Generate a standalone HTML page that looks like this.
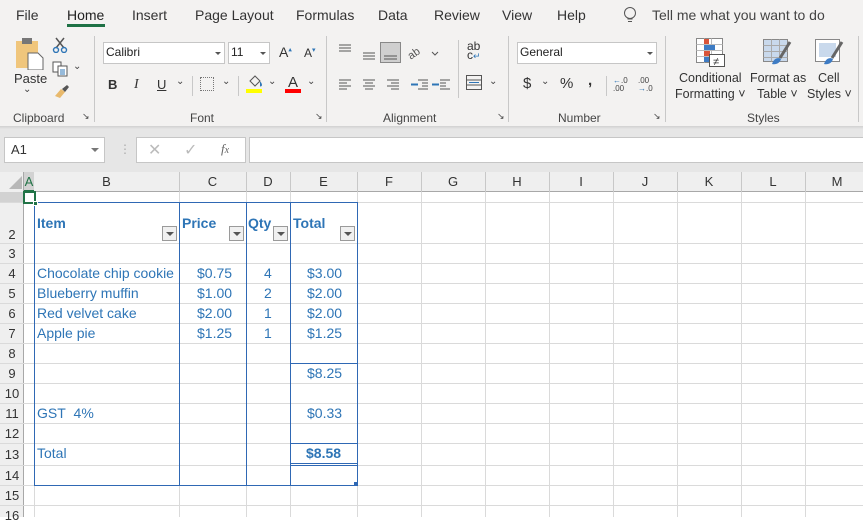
<!DOCTYPE html>
<html><head><meta charset="utf-8"><style>
*{margin:0;padding:0;box-sizing:border-box}
body{width:863px;height:517px;overflow:hidden;background:#fff;font-family:"Segoe UI","Liberation Sans",sans-serif;color:#333;position:relative}
.a{position:absolute}
.t{font-size:13px;color:#333;white-space:nowrap}
.sm{font-size:12px;color:#444;white-space:nowrap}
.vl{position:absolute;width:1px;background:#dadada}
.hl{position:absolute;height:1px;background:#dadada}
.bl{position:absolute;background:#2f68b4}
.c{position:absolute;font-family:"Liberation Sans",sans-serif;font-size:14px;color:#2e75b6;white-space:nowrap;margin-top:-1px}
.rh{position:absolute;left:0;width:24px;text-align:center;font-family:"Liberation Sans",sans-serif;font-size:13px;color:#333}
.ch{position:absolute;top:172px;height:20px;line-height:20px;text-align:center;font-family:"Liberation Sans",sans-serif;font-size:13px;color:#333}
.dd{position:absolute;width:15px;height:15px;border:1px solid #9a9a9a;background:#f0f0f0}
.dd:after{content:"";position:absolute;left:3px;top:5px;border-left:4px solid transparent;border-right:4px solid transparent;border-top:4px solid #555}
.sep{position:absolute;width:1px;background:#c8c8c8}
</style></head><body>
<div class="a" style="left:0;top:0;width:863px;height:126px;background:#f3f2f1"></div>
<div class="a" style="left:0;top:126px;width:863px;height:46px;background:#e6e6e6"></div>
<div class="a" style="left:0;top:126px;width:863px;height:3px;background:linear-gradient(#d0d0d0,#e6e6e6)"></div>
<div class="a t" style="left:16px;top:7px;font-size:14px">File</div>
<div class="a t" style="left:67px;top:7px;font-size:14px;color:#222">Home</div>
<div class="a" style="left:67px;top:24px;width:38px;height:3px;background:#1e7145"></div>
<div class="a t" style="left:132px;top:7px;font-size:14px">Insert</div>
<div class="a t" style="left:195px;top:7px;font-size:14px">Page Layout</div>
<div class="a t" style="left:296px;top:7px;font-size:14px">Formulas</div>
<div class="a t" style="left:378px;top:7px;font-size:14px">Data</div>
<div class="a t" style="left:434px;top:7px;font-size:14px">Review</div>
<div class="a t" style="left:502px;top:7px;font-size:14px">View</div>
<div class="a t" style="left:557px;top:7px;font-size:14px">Help</div>
<svg class="a" style="left:622px;top:6px" width="16" height="20"><circle cx="8" cy="7" r="5.5" fill="none" stroke="#555"/><path d="M5.5 13h5M6 15.5h4" stroke="#555"/></svg>
<div class="a t" style="left:652px;top:7px;font-size:14px;color:#444">Tell me what you want to do</div>
<svg class="a" style="left:14px;top:36px" width="32" height="34"><rect x="2" y="5" width="22" height="27" fill="#f0c67c"/><rect x="8" y="2" width="10" height="6" fill="#777"/><path d="M14 17h10l5 5v12H14z" fill="#fff" stroke="#666"/></svg>
<div class="a t" style="left:14px;top:71px">Paste</div>
<div class="a sm" style="left:23px;top:84px;font-size:10px">⌄</div>
<svg class="a" style="left:52px;top:37px" width="16" height="16"><path d="M4 1l8 10M12 1L4 11" stroke="#555" stroke-width="1.5"/><circle cx="4" cy="13" r="2.5" fill="none" stroke="#2e75b6" stroke-width="1.4"/><circle cx="12" cy="13" r="2.5" fill="none" stroke="#2e75b6" stroke-width="1.4"/></svg>
<svg class="a" style="left:52px;top:61px" width="16" height="16"><rect x="1" y="1" width="8" height="10" fill="#fff" stroke="#555"/><rect x="6" y="5" width="9" height="10" fill="#fff" stroke="#555"/><path d="M8 9h5M8 11h5M8 13h5" stroke="#2e75b6"/></svg>
<div class="a sm" style="left:73px;top:61px;font-size:10px">⌄</div>
<svg class="a" style="left:52px;top:83px" width="18" height="16"><path d="M3 13l6-7 4 3-5 6z" fill="#e8b96c"/><path d="M10 6l5-4 2 2-4 5z" fill="#555"/></svg>
<div class="a sm" style="left:13px;top:111px">Clipboard</div>
<div class="a sm" style="left:82px;top:111px;font-size:9px">↘</div>
<div class="sep" style="left:94px;top:36px;height:86px"></div>
<div class="a" style="left:103px;top:42px;width:122px;height:22px;background:#fff;border:1px solid #c6c6c6"></div>
<div class="a t" style="left:106px;top:45px;font-size:12px;color:#222">Calibri</div>
<div class="a" style="left:215px;top:52px;border-left:3px solid transparent;border-right:3px solid transparent;border-top:3px solid #555"></div>
<div class="a" style="left:228px;top:42px;width:42px;height:22px;background:#fff;border:1px solid #c6c6c6"></div>
<div class="a t" style="left:231px;top:45px;font-size:12px;color:#222">11</div>
<div class="a" style="left:260px;top:52px;border-left:3px solid transparent;border-right:3px solid transparent;border-top:3px solid #555"></div>
<div class="a t" style="left:279px;top:44px;font-size:14px">A<sup style="font-size:7px;color:#2e75b6">▴</sup></div>
<div class="a t" style="left:304px;top:46px;font-size:12px">A<sup style="font-size:7px;color:#2e75b6">▾</sup></div>
<div class="a t" style="left:108px;top:77px;font-weight:bold;font-family:'Liberation Sans'">B</div>
<div class="a t" style="left:134px;top:77px;font-style:italic;font-family:'Liberation Serif';font-size:14px">I</div>
<div class="a t" style="left:157px;top:77px;text-decoration:underline;font-family:'Liberation Sans'">U</div>
<div class="a sm" style="left:176px;top:76px;font-size:10px">⌄</div>
<div class="sep" style="left:192px;top:76px;height:20px"></div>
<div class="a" style="left:200px;top:77px;width:14px;height:14px;border:1px dotted #777"></div>
<div class="a sm" style="left:222px;top:76px;font-size:10px">⌄</div>
<div class="sep" style="left:238px;top:76px;height:20px"></div>
<svg class="a" style="left:246px;top:75px" width="18" height="14"><path d="M4 6l5-5 5 5-5 5z" fill="none" stroke="#555"/><path d="M14 7c2 2 2 4 0 4" stroke="#2e75b6" fill="#2e75b6"/></svg>
<div class="a" style="left:246px;top:89px;width:16px;height:4px;background:#ffff00"></div>
<div class="a sm" style="left:268px;top:76px;font-size:10px">⌄</div>
<div class="a t" style="left:288px;top:74px;font-size:15px">A</div>
<div class="a" style="left:285px;top:89px;width:16px;height:4px;background:#ff0000"></div>
<div class="a sm" style="left:307px;top:76px;font-size:10px">⌄</div>
<div class="a sm" style="left:190px;top:111px">Font</div>
<div class="a sm" style="left:315px;top:111px;font-size:9px">↘</div>
<div class="sep" style="left:326px;top:36px;height:86px"></div>
<svg class="a" style="left:336px;top:40px" width="170" height="60" stroke="#555" fill="none">
<path d="M3 5h12M3 8h12M3 11h12M27 13h12M27 16h12M27 19h12"/>
<rect x="44.5" y="2.5" width="20" height="20" fill="#cfcfcf" stroke="#888"/><path d="M48 16h13M48 19h13"/>
<text x="72" y="17" font-size="11" fill="#555" stroke="none" transform="rotate(-35 78 14)">ab</text><path d="M96 12l3 3 3-3"/>
<path d="M3 40h12M3 43h8M3 46h12M3 49h8M27 40h12M29 43h8M27 46h12M29 49h8M51 40h12M55 43h8M51 46h12M55 49h8"/>
<path d="M82 40h10M86 43h6M86 46h6M82 49h10" /><path d="M75 44.5h7" stroke="#2e75b6" stroke-width="2"/>
<path d="M104 40h10M104 43h6M104 46h6M104 49h10"/><path d="M96 44.5h7" stroke="#2e75b6" stroke-width="2"/>
</svg>
<div class="sep" style="left:458px;top:40px;height:58px"></div>
<div class="a t" style="left:467px;top:42px;font-size:12px;line-height:9px">ab<br>c<span style="color:#2e75b6;font-size:9px">↵</span></div>
<svg class="a" style="left:465px;top:74px" width="20" height="18"><rect x="1.5" y="1.5" width="15" height="14" fill="none" stroke="#555"/><path d="M1.5 6h15M1.5 11h15" stroke="#555"/><path d="M4 8.5h10" stroke="#2e75b6"/></svg>
<div class="a sm" style="left:489px;top:76px;font-size:10px">⌄</div>
<div class="a sm" style="left:383px;top:111px">Alignment</div>
<div class="a sm" style="left:497px;top:111px;font-size:9px">↘</div>
<div class="sep" style="left:508px;top:36px;height:86px"></div>
<div class="a" style="left:517px;top:42px;width:140px;height:22px;background:#fff;border:1px solid #c6c6c6"></div>
<div class="a t" style="left:520px;top:45px;font-size:12px;color:#222">General</div>
<div class="a" style="left:647px;top:52px;border-left:3px solid transparent;border-right:3px solid transparent;border-top:3px solid #555"></div>
<div class="a t" style="left:523px;top:75px;font-size:15px">$</div>
<div class="a sm" style="left:541px;top:76px;font-size:10px">⌄</div>
<div class="a t" style="left:560px;top:75px;font-size:15px">%</div>
<div class="a t" style="left:588px;top:72px;font-size:15px;font-weight:bold">,</div>
<div class="sep" style="left:606px;top:76px;height:20px"></div>
<div class="a" style="left:613px;top:77px;font-size:8px;line-height:8px;color:#444;font-family:'Liberation Sans'"><span style="color:#2e75b6">←</span>.0<br>.00</div>
<div class="a" style="left:638px;top:77px;font-size:8px;line-height:8px;color:#444;font-family:'Liberation Sans'">.00<br><span style="color:#2e75b6">→</span>.0</div>
<div class="a sm" style="left:558px;top:111px">Number</div>
<div class="a sm" style="left:653px;top:111px;font-size:9px">↘</div>
<div class="sep" style="left:665px;top:36px;height:86px"></div>
<svg class="a" style="left:695px;top:37px" width="32" height="32"><rect x="1.5" y="1.5" width="26" height="24" fill="#fff" stroke="#888"/><path d="M1.5 7.5h26M1.5 13.5h26M1.5 19.5h26M9.5 1.5v24M16.5 1.5v24" stroke="#bbb"/><rect x="9" y="2" width="5" height="5" fill="#d9553a"/><rect x="9" y="8" width="11" height="5" fill="#3e7cc4"/><rect x="9" y="14" width="6" height="5" fill="#d9553a"/><rect x="9" y="20" width="5" height="5" fill="#3e7cc4"/><rect x="14.5" y="17.5" width="15" height="12" fill="#fff" stroke="#555"/><text x="18" y="28" font-size="11" fill="#333">≠</text></svg>
<svg class="a" style="left:762px;top:38px" width="32" height="30"><rect x="1.5" y="1.5" width="24" height="22" fill="#c9d9ec" stroke="#888"/><path d="M1.5 7.5h24M1.5 13.5h24M1.5 19.5h24M9.5 1.5v22M17.5 1.5v22" stroke="#aaa"/><path d="M28 4l-10 16" stroke="#666" stroke-width="3"/><path d="M10 26c2-6 6-7 9-5-1 4-5 6-9 5z" fill="#3e7cc4"/></svg>
<svg class="a" style="left:814px;top:38px" width="32" height="30"><rect x="1.5" y="1.5" width="24" height="22" fill="#fff" stroke="#888"/><rect x="5" y="5" width="17" height="14" fill="#c9d9ec"/><path d="M28 4l-10 16" stroke="#666" stroke-width="3"/><path d="M10 26c2-6 6-7 9-5-1 4-5 6-9 5z" fill="#3e7cc4"/></svg>
<div class="a t" style="left:679px;top:71px;font-size:12.5px">Conditional</div>
<div class="a t" style="left:675px;top:87px;font-size:12.5px">Formatting ˅</div>
<div class="a t" style="left:750px;top:71px;font-size:12.5px">Format as</div>
<div class="a t" style="left:757px;top:87px;font-size:12.5px">Table ˅</div>
<div class="a t" style="left:818px;top:71px;font-size:12.5px">Cell</div>
<div class="a t" style="left:807px;top:87px;font-size:12.5px">Styles ˅</div>
<div class="a sm" style="left:747px;top:111px">Styles</div>
<div class="sep" style="left:858px;top:36px;height:86px"></div>
<div class="a" style="left:4px;top:137px;width:101px;height:26px;background:#fff;border:1px solid #c6c6c6"></div>
<div class="a t" style="left:11px;top:142px;font-family:'Liberation Sans'">A1</div>
<div class="a" style="left:91px;top:148px;border-left:4px solid transparent;border-right:4px solid transparent;border-top:4px solid #777"></div>
<div class="a sm" style="left:119px;top:142px;color:#aaa">⋮</div>
<div class="a" style="left:136px;top:137px;width:110px;height:26px;background:#fff;border:1px solid #c6c6c6"></div>
<div class="a" style="left:148px;top:140px;font-size:16px;color:#bbb">✕</div>
<div class="a" style="left:184px;top:140px;font-size:16px;color:#bbb">✓</div>
<div class="a" style="left:221px;top:141px;font-size:13px;color:#666;font-style:italic;font-family:'Liberation Serif'">f<span style="font-size:10px">x</span></div>
<div class="a" style="left:249px;top:137px;width:620px;height:26px;background:#fff;border:1px solid #c6c6c6"></div>
<div class="a" style="left:0;top:172px;width:863px;height:20px;background:#efefef;border-bottom:1px solid #a8a8a8"></div>
<div class="a" style="left:0;top:172px;width:24px;height:345px;background:#efefef;border-right:1px solid #a8a8a8"></div>
<div class="a" style="left:9px;top:176px;border-left:13px solid transparent;border-bottom:13px solid #b8b8b8"></div>
<div class="a" style="left:24px;top:172px;width:10px;height:20px;background:#d2d2d2;border-bottom:2px solid #217346"></div>
<div class="a" style="left:0;top:192px;width:24px;height:10px;background:#d2d2d2"></div>
<div class="ch" style="left:24px;width:10px;color:#217346">A</div>
<div class="ch" style="left:34px;width:145px">B</div>
<div class="ch" style="left:179px;width:67px">C</div>
<div class="ch" style="left:246px;width:44px">D</div>
<div class="ch" style="left:290px;width:67px">E</div>
<div class="ch" style="left:357px;width:64px">F</div>
<div class="ch" style="left:421px;width:64px">G</div>
<div class="ch" style="left:485px;width:64px">H</div>
<div class="ch" style="left:549px;width:64px">I</div>
<div class="ch" style="left:613px;width:64px">J</div>
<div class="ch" style="left:677px;width:64px">K</div>
<div class="ch" style="left:741px;width:64px">L</div>
<div class="ch" style="left:805px;width:64px">M</div>
<div class="vl" style="left:179px;top:172px;height:20px;background:#c8c8c8"></div>
<div class="vl" style="left:246px;top:172px;height:20px;background:#c8c8c8"></div>
<div class="vl" style="left:290px;top:172px;height:20px;background:#c8c8c8"></div>
<div class="vl" style="left:357px;top:172px;height:20px;background:#c8c8c8"></div>
<div class="vl" style="left:421px;top:172px;height:20px;background:#c8c8c8"></div>
<div class="vl" style="left:485px;top:172px;height:20px;background:#c8c8c8"></div>
<div class="vl" style="left:549px;top:172px;height:20px;background:#c8c8c8"></div>
<div class="vl" style="left:613px;top:172px;height:20px;background:#c8c8c8"></div>
<div class="vl" style="left:677px;top:172px;height:20px;background:#c8c8c8"></div>
<div class="vl" style="left:741px;top:172px;height:20px;background:#c8c8c8"></div>
<div class="vl" style="left:805px;top:172px;height:20px;background:#c8c8c8"></div>
<div class="vl" style="left:34px;top:192px;height:325px"></div>
<div class="vl" style="left:179px;top:192px;height:325px"></div>
<div class="vl" style="left:246px;top:192px;height:325px"></div>
<div class="vl" style="left:290px;top:192px;height:325px"></div>
<div class="vl" style="left:357px;top:192px;height:325px"></div>
<div class="vl" style="left:421px;top:192px;height:325px"></div>
<div class="vl" style="left:485px;top:192px;height:325px"></div>
<div class="vl" style="left:549px;top:192px;height:325px"></div>
<div class="vl" style="left:613px;top:192px;height:325px"></div>
<div class="vl" style="left:677px;top:192px;height:325px"></div>
<div class="vl" style="left:741px;top:192px;height:325px"></div>
<div class="vl" style="left:805px;top:192px;height:325px"></div>
<div class="hl" style="left:0;top:202px;width:863px"></div>
<div class="hl" style="left:0;top:243px;width:863px"></div>
<div class="hl" style="left:0;top:263px;width:863px"></div>
<div class="hl" style="left:0;top:283px;width:863px"></div>
<div class="hl" style="left:0;top:303px;width:863px"></div>
<div class="hl" style="left:0;top:323px;width:863px"></div>
<div class="hl" style="left:0;top:343px;width:863px"></div>
<div class="hl" style="left:0;top:363px;width:863px"></div>
<div class="hl" style="left:0;top:383px;width:863px"></div>
<div class="hl" style="left:0;top:403px;width:863px"></div>
<div class="hl" style="left:0;top:423px;width:863px"></div>
<div class="hl" style="left:0;top:443px;width:863px"></div>
<div class="hl" style="left:0;top:465px;width:863px"></div>
<div class="hl" style="left:0;top:485px;width:863px"></div>
<div class="hl" style="left:0;top:505px;width:863px"></div>
<div class="rh" style="top:227px">2</div>
<div class="rh" style="top:246px">3</div>
<div class="rh" style="top:266px">4</div>
<div class="rh" style="top:286px">5</div>
<div class="rh" style="top:306px">6</div>
<div class="rh" style="top:326px">7</div>
<div class="rh" style="top:346px">8</div>
<div class="rh" style="top:366px">9</div>
<div class="rh" style="top:386px">10</div>
<div class="rh" style="top:406px">11</div>
<div class="rh" style="top:426px">12</div>
<div class="rh" style="top:447px">13</div>
<div class="rh" style="top:468px">14</div>
<div class="rh" style="top:488px">15</div>
<div class="rh" style="top:508px">16</div>
<div class="bl" style="left:34px;top:202px;width:324px;height:1px"></div>
<div class="bl" style="left:34px;top:485px;width:324px;height:1px"></div>
<div class="bl" style="left:34px;top:202px;width:1px;height:284px"></div>
<div class="bl" style="left:179px;top:202px;width:1px;height:284px"></div>
<div class="bl" style="left:246px;top:202px;width:1px;height:284px"></div>
<div class="bl" style="left:290px;top:202px;width:1px;height:284px"></div>
<div class="bl" style="left:357px;top:202px;width:1px;height:284px"></div>
<div class="bl" style="left:290px;top:363px;width:68px;height:1px"></div>
<div class="bl" style="left:290px;top:443px;width:68px;height:1px"></div>
<div class="bl" style="left:290px;top:463px;width:68px;height:1px"></div>
<div class="bl" style="left:290px;top:465px;width:68px;height:1px"></div>
<div class="a" style="left:354px;top:482px;width:4px;height:4px;background:#2f68b4"></div>
<div class="a" style="left:23px;top:191px;width:13px;height:13px;border:2px solid #217346"></div>
<div class="a" style="left:33px;top:201px;width:5px;height:5px;background:#217346;border:1px solid #fff"></div>
<div class="c" style="left:37px;top:216px;font-weight:bold">Item</div>
<div class="c" style="left:182px;top:216px;font-weight:bold">Price</div>
<div class="c" style="left:248px;top:216px;font-weight:bold">Qty</div>
<div class="c" style="left:293px;top:216px;font-weight:bold">Total</div>
<div class="dd" style="left:162px;top:226px"></div>
<div class="dd" style="left:229px;top:226px"></div>
<div class="dd" style="left:273px;top:226px"></div>
<div class="dd" style="left:340px;top:226px"></div>
<div class="c" style="left:37px;top:266px">Chocolate chip cookie</div>
<div class="c" style="left:37px;top:286px">Blueberry muffin</div>
<div class="c" style="left:37px;top:306px">Red velvet cake</div>
<div class="c" style="left:37px;top:326px">Apple pie</div>
<div class="c" style="left:197px;top:266px">$0.75</div>
<div class="c" style="left:197px;top:286px">$1.00</div>
<div class="c" style="left:197px;top:306px">$2.00</div>
<div class="c" style="left:197px;top:326px">$1.25</div>
<div class="c" style="left:264px;top:266px">4</div>
<div class="c" style="left:264px;top:286px">2</div>
<div class="c" style="left:264px;top:306px">1</div>
<div class="c" style="left:264px;top:326px">1</div>
<div class="c" style="left:307px;top:266px">$3.00</div>
<div class="c" style="left:307px;top:286px">$2.00</div>
<div class="c" style="left:307px;top:306px">$2.00</div>
<div class="c" style="left:307px;top:326px">$1.25</div>
<div class="c" style="left:307px;top:366px">$8.25</div>
<div class="c" style="left:37px;top:406px">GST&nbsp; 4%</div>
<div class="c" style="left:307px;top:406px">$0.33</div>
<div class="c" style="left:37px;top:446px">Total</div>
<div class="c" style="left:306px;top:446px;font-weight:bold">$8.58</div>
</body></html>
